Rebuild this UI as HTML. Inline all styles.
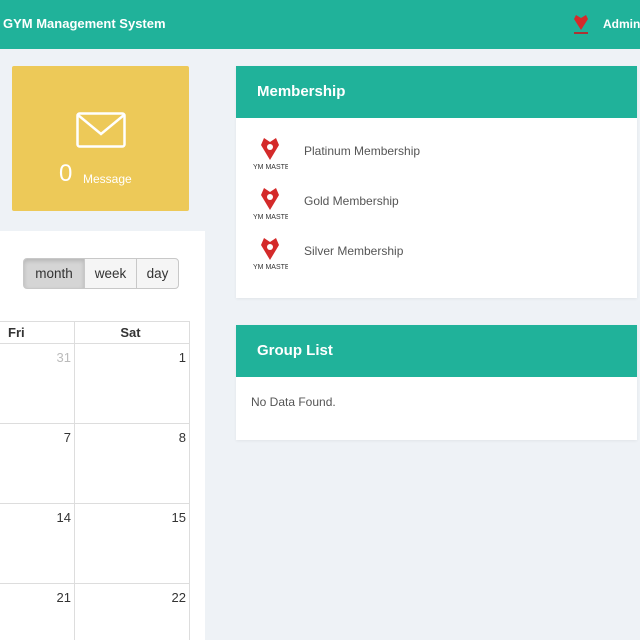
<!DOCTYPE html>
<html style="overflow:hidden;height:640px"><head><style>
*{margin:0;padding:0;box-sizing:border-box}
body{width:640px;height:640px;overflow:hidden;background:#eef2f6;font-family:"Liberation Sans",sans-serif;position:relative}
.top{position:absolute;left:0;top:0;width:640px;height:49px;background:#20b29a;color:#fff}
.abs{position:absolute}
.card{position:absolute;background:#fff;box-shadow:0 1px 3px rgba(0,0,0,.06)}
.ch{background:#20b29a;color:#fff;font-weight:bold;font-size:15px;height:52px;line-height:52px;padding-left:21px}
.btn{position:absolute;top:258px;height:31px;line-height:30px;font-size:13.5px;color:#333;border:1px solid #c8c8c8;background:#f5f5f5;text-align:center}
.cell{position:absolute;border-right:1px solid #ddd;border-bottom:1px solid #ddd;font-size:13px;text-align:right;padding:6px 3px 0 0;color:#333}
</style></head><body>
<div class="top">
<div class="abs" style="left:3px;top:16px;font-size:13px;font-weight:bold">GYM Management System</div>
<svg class="abs" style="left:572px;top:13px" width="18" height="22" viewBox="0 0 18 22"><path d="M4 2 L9 5 L14 2 L16 6 L9 17 L2 6Z" fill="#d42a2a"/><rect x="2" y="19" width="14" height="2" fill="#a33"/></svg>
<div class="abs" style="left:603px;top:17px;font-size:12px;font-weight:bold">Admin</div>
</div>
<div class="abs" style="left:12px;top:66px;width:177px;height:145px;background:#edc958;border-radius:2px"></div>
<svg class="abs" style="left:76px;top:112px" width="50" height="36" viewBox="0 0 50 36"><rect x="1.5" y="1.5" width="47" height="33" fill="none" stroke="#fff" stroke-width="2.5" rx="2"/><path d="M2 3 L25 22 L48 3" fill="none" stroke="#fff" stroke-width="2.5"/></svg>
<div class="abs" style="left:59px;top:160px;font-size:24px;color:#fff">0</div>
<div class="abs" style="left:83px;top:172px;font-size:12px;color:#fff">Message</div>

<div class="abs" style="left:0;top:231px;width:205px;height:409px;background:#fff"></div>
<div class="btn" style="left:23px;width:62px;background:#d5d5d5;border-radius:4px 0 0 4px;box-shadow:inset 0 2px 4px rgba(0,0,0,.15)">month</div>
<div class="btn" style="left:84px;width:53px">week</div>
<div class="btn" style="left:136px;width:43px;border-radius:0 4px 4px 0">day</div>
<div class="abs" style="left:0;top:321px;width:190px;height:1px;background:#ddd"></div>
<div class="cell" style="left:-1px;top:322px;width:76px;height:22px;text-align:left;padding:3px 0 0 9px;font-weight:bold">Fri</div>
<div class="cell" style="left:74px;top:322px;width:116px;height:22px;text-align:center;padding-top:3px;font-weight:bold;border-left:1px solid #ddd">Sat</div>
<div class="cell" style="left:-1px;top:344px;width:76px;height:80px;color:#bbb">31</div>
<div class="cell" style="left:74px;top:344px;width:116px;height:80px;border-left:1px solid #ddd">1</div>
<div class="cell" style="left:-1px;top:424px;width:76px;height:80px">7</div>
<div class="cell" style="left:74px;top:424px;width:116px;height:80px;border-left:1px solid #ddd">8</div>
<div class="cell" style="left:-1px;top:504px;width:76px;height:80px">14</div>
<div class="cell" style="left:74px;top:504px;width:116px;height:80px;border-left:1px solid #ddd">15</div>
<div class="cell" style="left:-1px;top:584px;width:76px;height:56px;border-bottom:none">21</div>
<div class="cell" style="left:74px;top:584px;width:116px;height:56px;border-left:1px solid #ddd;border-bottom:none">22</div>

<div class="card" style="left:236px;top:66px;width:401px;height:232px">
<div class="ch">Membership</div>
<div style="position:relative">
<div class="abs" style="left:16px;top:18px"><svg width="36" height="36" viewBox="0 0 36 36"><path d="M12 2 L18 6 L24 2 L27 9 L18 24 L9 9Z" fill="#d42a2a"/><circle cx="18" cy="11" r="3" fill="#fff"/><text x="1" y="33" font-size="7" fill="#333" font-family="Liberation Sans">YM MASTE</text></svg></div>
<div class="abs" style="left:68px;top:26px;font-size:12px;color:#555">Platinum Membership</div>
<div class="abs" style="left:16px;top:68px"><svg width="36" height="36" viewBox="0 0 36 36"><path d="M12 2 L18 6 L24 2 L27 9 L18 24 L9 9Z" fill="#d42a2a"/><circle cx="18" cy="11" r="3" fill="#fff"/><text x="1" y="33" font-size="7" fill="#333" font-family="Liberation Sans">YM MASTE</text></svg></div>
<div class="abs" style="left:68px;top:76px;font-size:12px;color:#555">Gold Membership</div>
<div class="abs" style="left:16px;top:118px"><svg width="36" height="36" viewBox="0 0 36 36"><path d="M12 2 L18 6 L24 2 L27 9 L18 24 L9 9Z" fill="#d42a2a"/><circle cx="18" cy="11" r="3" fill="#fff"/><text x="1" y="33" font-size="7" fill="#333" font-family="Liberation Sans">YM MASTE</text></svg></div>
<div class="abs" style="left:68px;top:126px;font-size:12px;color:#555">Silver Membership</div>
</div>
</div>
<div class="card" style="left:236px;top:325px;width:401px;height:115px">
<div class="ch">Group List</div>
<div class="abs" style="left:15px;top:70px;font-size:12px;color:#555">No Data Found.</div>
</div>
</body></html>
